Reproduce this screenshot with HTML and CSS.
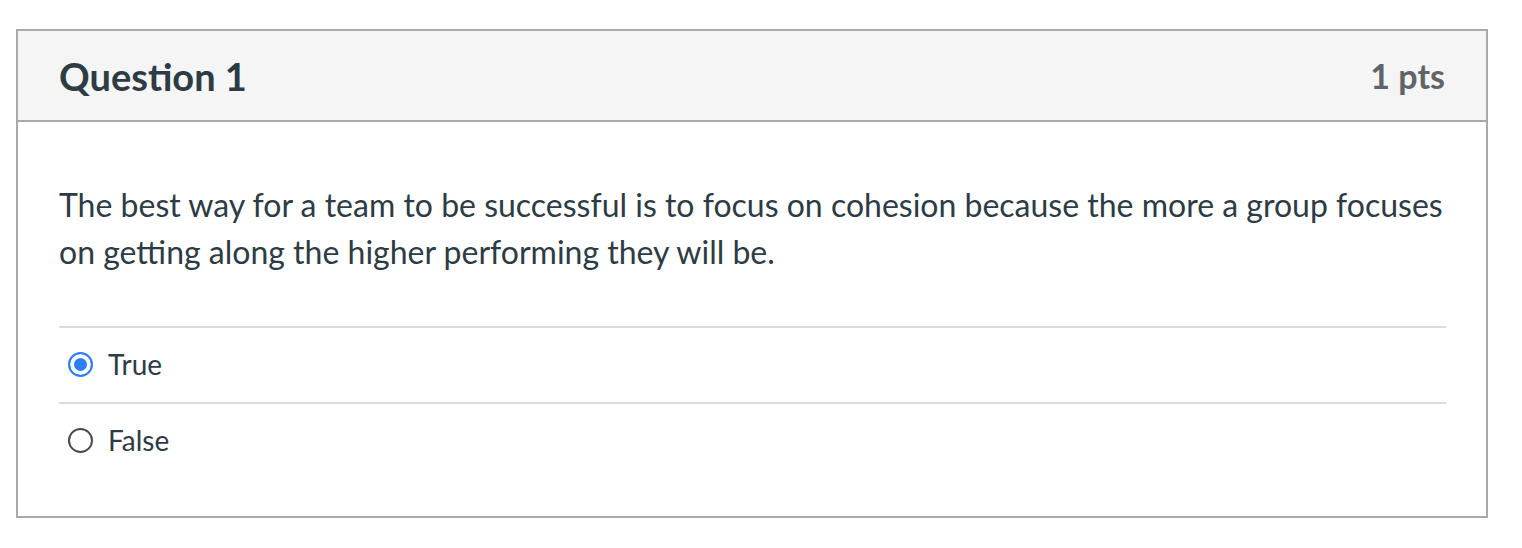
FILE: index.html
```html
<!DOCTYPE html>
<html>
<head>
<meta charset="utf-8">
<link rel="stylesheet" href="styles.css">
</head>
<body>
<div class="question">
  <div class="q-header">
    <h2 class="q-title">Question 1</h2>
    <div class="q-points">1 pts</div>
  </div>
  <div class="q-body">
    <p class="q-text">The best way for a team to be successful is to focus on cohesion because the more a group focuses on getting along the higher performing they will be.</p>
    <div class="answers">
      <label class="answer">
        <span class="radio checked"></span>
        <span class="answer-label">True</span>
      </label>
      <label class="answer">
        <span class="radio"></span>
        <span class="answer-label">False</span>
      </label>
    </div>
  </div>
</div>
</body>
</html>
```

FILE: styles.css
```css
html, body {
  margin: 0;
  padding: 0;
  background: #ffffff;
}
body {
  font-family: Lato, "Noto Sans", sans-serif;
  color: #2d3b45;
}
.question {
  margin: 29px 0 0 16px;
  width: 1468px;
  border: 2px solid #a9a9a9;
}
.q-header {
  height: 89px;
  background: #f5f5f5;
  border-bottom: 2px solid #a9a9a9;
  display: flex;
  align-items: center;
  justify-content: space-between;
  padding: 0 41px 0 41px;
}
.q-title {
  margin: 0;
  font-size: 38px;
  font-weight: 700;
  color: #2d3b45;
}
.q-points {
  font-size: 34px;
  font-weight: 700;
  color: #5f6468;
}
.q-body {
  padding: 59px 40px 38px 41px;
}
.q-text {
  margin: 0 0 51px 0;
  font-size: 32px;
  line-height: 47px;
}
.answers {
  display: flex;
  flex-direction: column;
}
.answer {
  height: 71px;
  padding-bottom: 3px;
  border-top: 2px solid #dcdcdc;
  display: flex;
  align-items: center;
}
.radio {
  width: 21px;
  height: 21px;
  border: 2px solid #4a4a4a;
  border-radius: 50%;
  margin-left: 9px;
  margin-right: 15px;
  margin-top: 2px;
  box-sizing: content-box;
}
.radio.checked {
  border: 2px solid #2d7ff9;
  box-shadow: inset 0 0 0 4px #ffffff;
  background: #2d7ff9;
}
.answer-label {
  font-size: 28px;
  color: #2d3b45;
}
```
